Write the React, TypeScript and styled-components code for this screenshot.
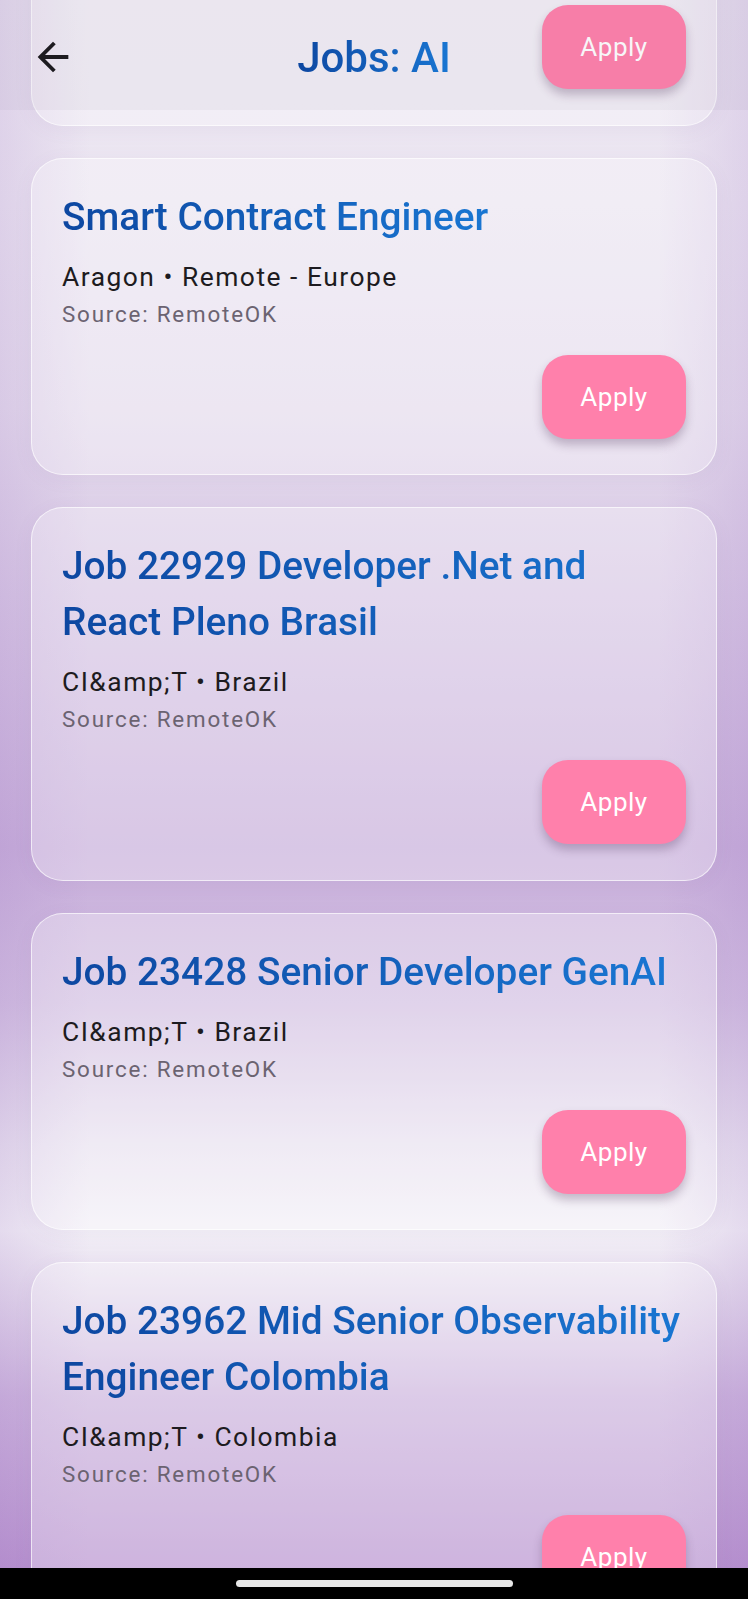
import { useLayoutEffect, useRef } from 'react'
import styled, { createGlobalStyle } from 'styled-components'

type Job = {
  title: string
  company: string
  location: string
  source: string
}

// list is scrolled a bit, first card sits under the app bar
const LIST_TOP = 126
const SCROLL_OFFSET = 318

const jobs: Job[] = [
  { title: 'AI Platform Engineer', company: 'Hugging Face', location: 'Remote', source: 'RemoteOK' },
  { title: 'Smart Contract Engineer', company: 'Aragon', location: 'Remote - Europe', source: 'RemoteOK' },
  {
    title: 'Job 22929 Developer .Net and React Pleno Brasil',
    company: 'CI&amp;T',
    location: 'Brazil',
    source: 'RemoteOK',
  },
  { title: 'Job 23428 Senior Developer GenAI', company: 'CI&amp;T', location: 'Brazil', source: 'RemoteOK' },
  {
    title: 'Job 23962 Mid Senior Observability Engineer Colombia',
    company: 'CI&amp;T',
    location: 'Colombia',
    source: 'RemoteOK',
  },
  { title: 'Job 24105 Senior Data Engineer', company: 'CI&amp;T', location: 'Brazil', source: 'RemoteOK' },
]

const GlobalStyle = createGlobalStyle`
  html, body {
    margin: 0;
    height: 100%;
    overflow: hidden;
  }
  #root {
    height: 100%;
  }
  * {
    box-sizing: border-box;
  }
`

const JobCard = ({ job }: { job: Job }) => (
  <Card>
    <JobTitle>{job.title}</JobTitle>
    <Meta>
      {job.company} • {job.location}
    </Meta>
    <Source>Source: {job.source}</Source>
    <Actions>
      <ApplyButton>Apply</ApplyButton>
    </Actions>
  </Card>
)

const App = () => {
  const listRef = useRef<HTMLDivElement>(null)

  useLayoutEffect(() => {
    if (listRef.current) listRef.current.scrollTop = SCROLL_OFFSET
  }, [])

  return (
    <Page>
      <GlobalStyle />
      <Screen>
        <List ref={listRef}>
          {jobs.map((job) => (
            <JobCard key={job.title} job={job} />
          ))}
        </List>
        <AppBar>
          <BackButton aria-label="Back">
            <svg width="46" height="46" viewBox="0 0 24 24" fill="#1d1b20">
              <path d="M20 11H7.83l5.59-5.59L12 4l-8 8 8 8 1.41-1.41L7.83 13H20v-2z" />
            </svg>
          </BackButton>
          <Title>Jobs: AI</Title>
          <span />
        </AppBar>
      </Screen>
      <NavBar>
        <Handle />
      </NavBar>
    </Page>
  )
}

const Page = styled.div`
  display: flex;
  flex-direction: column;
  height: 100vh;
  font-family: Roboto, 'Noto Sans', sans-serif;
`

const Screen = styled.div`
  flex: 1;
  position: relative;
  overflow: hidden;
  background: linear-gradient(
      90deg,
      rgba(150, 105, 190, 0.16) 0%,
      rgba(150, 105, 190, 0) 12%,
      rgba(150, 105, 190, 0) 88%,
      rgba(150, 105, 190, 0.16) 100%
    ),
    linear-gradient(
      180deg,
      #eee9f3 0%,
      #ebe5f1 13%,
      #e5dced 26%,
      #d8c8e5 38%,
      #c8afdb 54%,
      #d3c0e2 64%,
      #e9e2f0 73%,
      #f3f0f7 78.5%,
      #e3d8ec 83%,
      #cdb5de 89%,
      #b994d0 100%
    );
`

const List = styled.div`
  height: 100%;
  overflow-y: auto;
  scrollbar-width: none;
  padding: ${LIST_TOP}px 31px 40px;
  display: flex;
  flex-direction: column;
  gap: 32px;

  &::-webkit-scrollbar {
    display: none;
  }
`

const AppBar = styled.header`
  position: absolute;
  top: 0;
  left: 0;
  right: 0;
  height: 110px;
  padding-top: 4px;
  display: grid;
  grid-template-columns: 1fr auto 1fr;
  align-items: center;
  background: rgba(120, 100, 140, 0.06);
`

const BackButton = styled.button`
  justify-self: start;
  display: flex;
  background: none;
  border: none;
  padding: 0 0 0 30px;
  cursor: pointer;
`

const Title = styled.h1`
  margin: 0;
  font-size: 42px;
  font-weight: 500;
  background: linear-gradient(90deg, #0d47a1, #1976d2);
  -webkit-background-clip: text;
  background-clip: text;
  color: transparent;
`

const Card = styled.div`
  display: flex;
  flex-direction: column;
  flex-shrink: 0;
  padding: 30px 30px 35.5px;
  border-radius: 32px;
  border: 1.5px solid rgba(255, 255, 255, 0.65);
  background: rgba(255, 255, 255, 0.3);
  box-shadow: 0 4px 20px rgba(120, 80, 150, 0.06);
`

const JobTitle = styled.h2`
  margin: 0;
  width: fit-content;
  font-size: 38.8px;
  line-height: 56px;
  font-weight: 500;
  background: linear-gradient(90deg, #0d47a1, #1976d2);
  -webkit-background-clip: text;
  background-clip: text;
  color: transparent;
`

const Meta = styled.div`
  margin-top: 14px;
  font-size: 26.4px;
  line-height: 36px;
  letter-spacing: 1.5px;
  color: #1d1b20;
`

const Source = styled.div`
  margin-top: 4px;
  font-size: 22.4px;
  line-height: 30px;
  letter-spacing: 1.8px;
  color: #6b6371;
`

const Actions = styled.div`
  margin-top: 26px;
  display: flex;
  justify-content: flex-end;
`

const ApplyButton = styled.button`
  width: 144px;
  height: 84px;
  border: none;
  border-radius: 26px;
  background: #ff80ab;
  color: #fff;
  font-family: Roboto, sans-serif;
  font-size: 26px;
  font-weight: 400;
  letter-spacing: 0.5px;
  box-shadow: 0 6px 10px rgba(70, 40, 80, 0.28);
  cursor: pointer;
`

const NavBar = styled.div`
  height: 31px;
  flex-shrink: 0;
  background: #000;
  display: flex;
  align-items: center;
  justify-content: center;
`

const Handle = styled.div`
  width: 277px;
  height: 7px;
  border-radius: 4px;
  background: #e8e8e8;
`

export default App
